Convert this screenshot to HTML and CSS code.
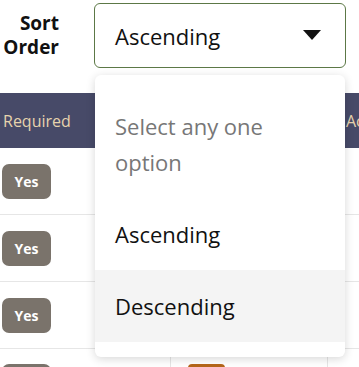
FILE: index.html
```html
<!DOCTYPE html>
<html lang="en">
  <head>
    <meta charset="UTF-8" />
    <meta name="viewport" content="width=device-width, initial-scale=1.0" />
    <link rel="stylesheet" href="styles.css">
  </head>
  <body>
    <div class="page">
      <div class="filter">
        <div class="filter-label">Sort<br />Order</div>
        <div class="select">
          <span>Ascending</span>
          <svg class="caret" width="18" height="10" viewBox="0 0 18 10"><polygon points="0,0 18,0 9,10" fill="#111" /></svg>
        </div>
      </div>

      <div class="menu">
        <div class="menu-item placeholder">Select any one option</div>
        <div class="menu-item">Ascending</div>
        <div class="menu-item active">Descending</div>
      </div>

      <table class="grid">
        <thead>
          <tr>
            <th class="col-1">Required</th>
            <th class="col-2"></th>
            <th class="col-3">Actions</th>
          </tr>
        </thead>
        <tbody>
          <tr>
            <td><span class="badge">Yes</span></td>
            <td></td>
            <td></td>
          </tr>
          <tr>
            <td><span class="badge">Yes</span></td>
            <td></td>
            <td></td>
          </tr>
          <tr>
            <td><span class="badge">Yes</span></td>
            <td></td>
            <td></td>
          </tr>
          <tr class="last">
            <td><span class="badge">Yes</span></td>
            <td><span class="tag"></span></td>
            <td></td>
          </tr>
        </tbody>
      </table>
    </div>
  </body>
</html>
```

FILE: styles.css
```css
body {
  margin: 0;
  padding: 0;
  background-color: #fff;
  font-family: "Open Sans", "Noto Sans", sans-serif;
  color: #1b1b1b;
  overflow: hidden;
}

.page {
  position: relative;
  width: 359px;
  height: 367px;
  overflow: hidden;
}

.filter {
  display: flex;
  align-items: center;
  padding-top: 3px;
  height: 65px;
}

.filter-label {
  width: 59px;
  margin-top: -2px;
  text-align: right;
  font-weight: 700;
  font-size: 19px;
  line-height: 24px;
  color: #111;
}

.select {
  margin-left: 35px;
  width: 252px;
  height: 65px;
  box-sizing: border-box;
  border: 1px solid #5c7846;
  border-radius: 6px;
  display: flex;
  align-items: center;
  justify-content: space-between;
  padding: 0 24px 0 20px;
  font-size: 22px;
  color: #111;
}

.caret {
  display: block;
  margin-top: -2px;
}

/* dropdown list over the table */
.menu {
  position: absolute;
  left: 95px;
  top: 75px;
  width: 250px;
  height: 282px;
  box-sizing: border-box;
  padding: 15px 0;
  background-color: #fff;
  border-radius: 6px;
  box-shadow: 0 2px 10px rgba(0, 0, 0, 0.16);
  z-index: 2;
}

.menu-item {
  padding: 18px 20px;
  font-size: 22px;
  line-height: 36px;
  color: #111;
}

.menu-item.placeholder {
  color: #777;
  padding-right: 40px;
}

.menu-item.active {
  background-color: #f4f4f4;
}

.grid {
  margin-top: 25px;
  width: 359px;
  border-collapse: collapse;
  table-layout: fixed;
}

.grid th {
  height: 55px;
  background-color: #474a68;
  color: #e6d3ad;
  font-weight: 400;
  font-size: 16px;
  text-align: left;
  padding: 0;
}

.grid .col-1 {
  width: 167px;
  padding-left: 3px;
}

.grid .col-2 {
  width: 157px;
}

.grid .col-3 {
  padding-left: 19px;
}

.grid td {
  height: 66px;
  padding: 0 0 0 2px;
  border-bottom: 1px solid #e6e6e6;
  vertical-align: middle;
}

.grid tr.last td {
  border-left: 1px solid #e6e6e6;
  vertical-align: top;
  padding-top: 15px;
}

.grid tr.last td:first-child {
  border-left: none;
}

.badge {
  display: inline-block;
  width: 49px;
  height: 35px;
  line-height: 35px;
  text-align: center;
  border-radius: 7px;
  background-color: #7a736b;
  color: #fff;
  font-weight: 700;
  font-size: 14px;
}

.tag {
  display: inline-block;
  margin-left: 15px;
  width: 37px;
  height: 30px;
  border-radius: 4px;
  background-color: #b5661a;
}
```
